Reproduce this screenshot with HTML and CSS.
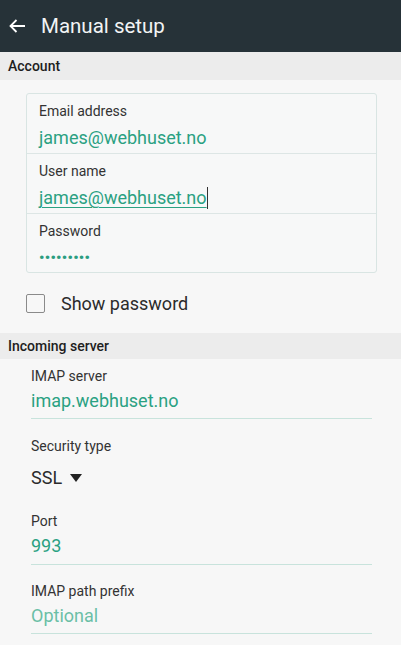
FILE: index.html
```html
<!DOCTYPE html>
<html>
<head>
<meta charset="utf-8">
<link rel="stylesheet" href="styles.css">
</head>
<body>
<div class="screen">
  <header class="appbar">
    <svg class="back" width="18" height="18" viewBox="0 0 18 18"><path d="M17 9H2.5M8.5 3L2.5 9l6 6" fill="none" stroke="#fff" stroke-width="1.8"/></svg>
    <span class="title">Manual setup</span>
  </header>
  <div class="section">Account</div>
  <div class="card">
    <div class="crow">
      <div class="clabel">Email address</div>
      <div class="cvalue">james@webhuset.no</div>
    </div>
    <div class="crow">
      <div class="clabel">User name</div>
      <div class="cvalue"><span class="ul">james@webhuset.no</span><span class="caret"></span></div>
    </div>
    <div class="crow">
      <div class="clabel">Password</div>
      <div class="cvalue dots">•••••••••</div>
    </div>
  </div>
  <div class="check">
    <span class="box"></span>
    <span class="checktext">Show password</span>
  </div>
  <div class="section section2">Incoming server</div>
  <div class="fields">
    <div class="field">
      <div class="flabel">IMAP server</div>
      <div class="fvalue">imap.webhuset.no</div>
    </div>
    <div class="field plain">
      <div class="flabel">Security type</div>
      <div class="select">SSL <span class="tri"></span></div>
    </div>
    <div class="field roomy">
      <div class="flabel">Port</div>
      <div class="fvalue">993</div>
    </div>
    <div class="field">
      <div class="flabel">IMAP path prefix</div>
      <div class="fvalue hint">Optional</div>
    </div>
  </div>
</div>
</body>
</html>
```
FILE: styles.css
```css
* { box-sizing: border-box; }
html, body { margin: 0; padding: 0; }
body {
  font-family: Roboto, "Noto Sans", sans-serif;
  background: #f7f7f7;
  width: 401px;
  height: 645px;
  overflow: hidden;
}
.screen { width: 401px; }
.appbar {
  height: 52px;
  background: #263238;
  display: flex;
  align-items: center;
  padding-left: 8px;
  color: #fff;
}
.back { display: block; }
.title {
  margin-left: 15px;
  font-size: 20.5px;
  color: #f2f4f5;
}
.section {
  height: 28px;
  background: #ececec;
  font-size: 14px;
  font-weight: 500;
  color: #1e1e1e;
  padding-left: 8px;
  line-height: 28px;
}
.section2 { height: 26px; line-height: 26px; }
.card {
  margin: 13px 24px 0 26px;
  border: 1px solid #d9e5e3;
  border-radius: 3px;
  background: #f7f8f8;
}
.crow {
  height: 60px;
  padding: 8px 0 0 12px;
  border-bottom: 1px solid #dde6e5;
}
.crow:last-child { border-bottom: none; height: 58px; }
.clabel {
  font-size: 14px;
  line-height: 18px;
  color: #333;
}
.cvalue {
  margin-top: 5px;
  font-size: 18px;
  line-height: 26px;
  color: #2aa182;
  display: flex;
  align-items: center;
}
.ul { text-decoration: underline; text-decoration-thickness: 1px; text-underline-offset: 3px; }
.caret {
  display: inline-block;
  width: 1.5px;
  height: 22px;
  background: #333;
}
.dots {
  margin-top: 5px;
  font-size: 15px;
  letter-spacing: 0.3px;
  font-weight: 700;
  color: #2a9d80;
}
.check {
  height: 60px;
  display: flex;
  align-items: center;
  padding-left: 26px;
}
.box {
  width: 19px;
  height: 19px;
  border: 1.5px solid #8a8a8a;
  border-radius: 2px;
}
.checktext {
  margin-left: 16px;
  font-size: 18px;
  color: #2b2b2b;
}
.fields { padding: 7px 29px 0 31px; }
.field {
  border-bottom: 1px solid #c8e3dc;
  padding-bottom: 3px;
  margin-bottom: 17px;
}
.field.roomy { padding-bottom: 4px; margin-bottom: 16px; }
.field.plain { border-bottom: none; padding-bottom: 0; margin-bottom: 20px; }
.flabel {
  font-size: 14px;
  line-height: 20px;
  color: #333;
}
.fvalue {
  margin-top: 1px;
  font-size: 18px;
  line-height: 28px;
  color: #2aa182;
}
.hint { color: #6bbfa6; }
.select {
  margin-top: 9px;
  font-size: 18px;
  line-height: 26px;
  color: #2b2b2b;
  display: flex;
  align-items: center;
}
.tri {
  margin-left: 8px;
  width: 0;
  height: 0;
  border-left: 6px solid transparent;
  border-right: 6px solid transparent;
  border-top: 8px solid #222;
}
```
